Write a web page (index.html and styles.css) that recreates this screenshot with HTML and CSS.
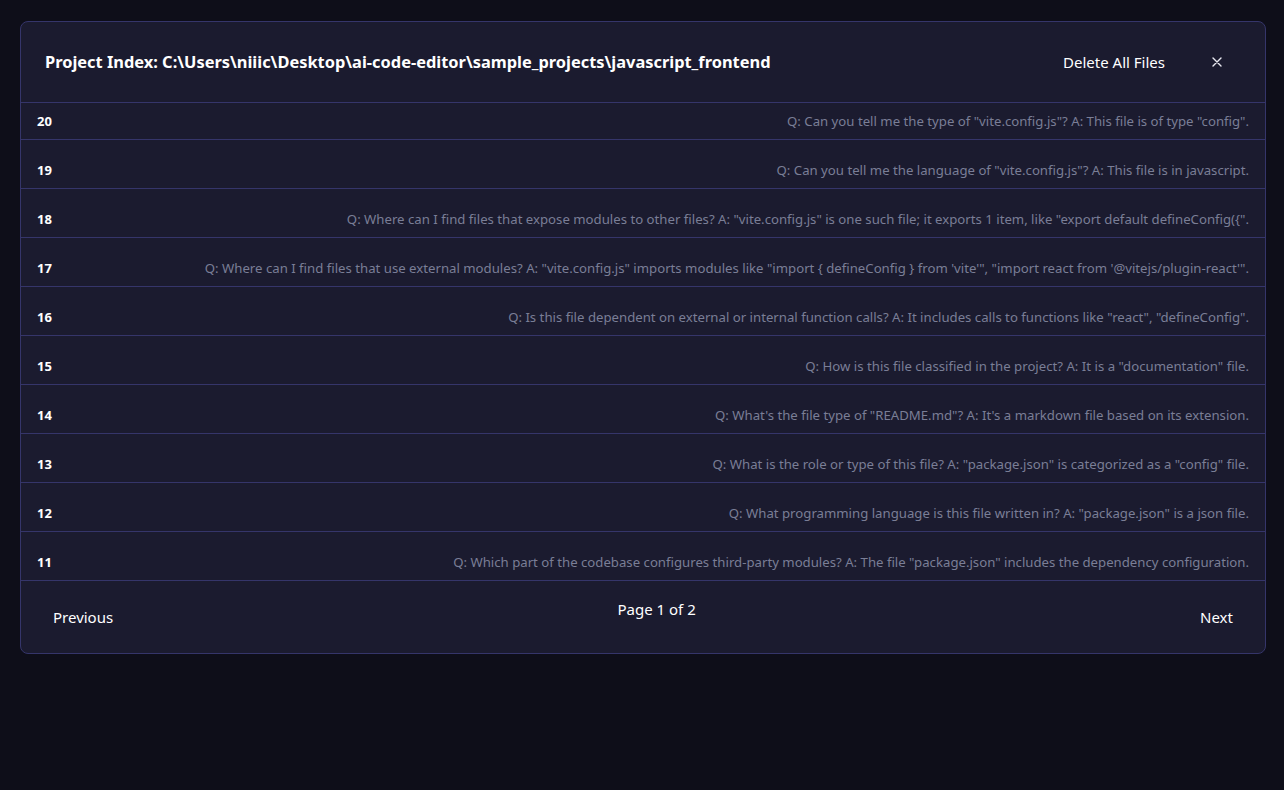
FILE: index.html
```html
<!DOCTYPE html>
<html lang="en">
<head>
<meta charset="utf-8">
<title>Project Index</title>
<link rel="stylesheet" href="styles.css">
</head>
<body>
<div class="modal">
  <header class="modal-header">
    <h2 class="title">Project Index: C:\Users\niiic\Desktop\ai-code-editor\sample_projects\javascript_frontend</h2>
    <div class="actions">
      <button class="btn-text">Delete All Files</button>
      <button class="btn-close" aria-label="Close">
        <svg width="10" height="10" viewBox="0 0 10 10"><path d="M1 1L9 9M9 1L1 9" stroke="#e8e8f0" stroke-width="1.4" stroke-linecap="round"/></svg>
      </button>
    </div>
  </header>
  <div class="list-viewport">
    <ul class="list">
      <li class="row"><span class="num">20</span><span class="qa">Q: Can you tell me the type of "vite.config.js"? A: This file is of type "config".</span></li>
      <li class="row"><span class="num">19</span><span class="qa">Q: Can you tell me the language of "vite.config.js"? A: This file is in javascript.</span></li>
      <li class="row"><span class="num">18</span><span class="qa">Q: Where can I find files that expose modules to other files? A: "vite.config.js" is one such file; it exports 1 item, like "export default defineConfig({".</span></li>
      <li class="row"><span class="num">17</span><span class="qa">Q: Where can I find files that use external modules? A: "vite.config.js" imports modules like "import { defineConfig } from 'vite'", "import react from '@vitejs/plugin-react'".</span></li>
      <li class="row"><span class="num">16</span><span class="qa">Q: Is this file dependent on external or internal function calls? A: It includes calls to functions like "react", "defineConfig".</span></li>
      <li class="row"><span class="num">15</span><span class="qa">Q: How is this file classified in the project? A: It is a "documentation" file.</span></li>
      <li class="row"><span class="num">14</span><span class="qa">Q: What's the file type of "README.md"? A: It's a markdown file based on its extension.</span></li>
      <li class="row"><span class="num">13</span><span class="qa">Q: What is the role or type of this file? A: "package.json" is categorized as a "config" file.</span></li>
      <li class="row"><span class="num">12</span><span class="qa">Q: What programming language is this file written in? A: "package.json" is a json file.</span></li>
      <li class="row"><span class="num">11</span><span class="qa">Q: Which part of the codebase configures third-party modules? A: The file "package.json" includes the dependency configuration.</span></li>
    </ul>
  </div>
  <footer class="modal-footer">
    <button class="btn-text">Previous</button>
    <span class="page">Page 1 of 2</span>
    <button class="btn-text">Next</button>
  </footer>
</div>
</body>
</html>
```

FILE: styles.css
```css
html, body {
  margin: 0;
  padding: 0;
  background: #0e0e19;
  font-family: "Segoe UI", "Noto Sans", "Open Sans", sans-serif;
}
body {
  padding: 21px 18px 0 20px;
  height: 790px;
  box-sizing: border-box;
}
.modal {
  background: #1b1b2f;
  border: 1px solid #35356a;
  border-radius: 8px;
  overflow: hidden;
  display: flex;
  flex-direction: column;
}
.modal-header {
  height: 80px;
  display: flex;
  align-items: center;
  justify-content: space-between;
  padding: 0 35px 1px 24px;
  box-sizing: border-box;
  height: 81px;
  border-bottom: 1px solid #35356a;
}
.title {
  margin: 0;
  color: #ffffff;
  font-size: 16.4px;
  font-weight: 700;
}
.actions {
  display: flex;
  align-items: center;
  gap: 39px;
}
.btn-text {
  background: none;
  border: 0;
  padding: 0;
  color: #ffffff;
  font-family: inherit;
  font-size: 15px;
  cursor: pointer;
}
.btn-close {
  background: none;
  border: 0;
  padding: 8px;
  display: flex;
  cursor: pointer;
}
.list-viewport {
  height: 477px;
  overflow: hidden;
}
.list {
  list-style: none;
  margin: -12px 0 0 0;
  padding: 0;
}
.row {
  box-sizing: border-box;
  height: 49px;
  border-bottom: 1px solid #35356a;
  display: flex;
  align-items: center;
  justify-content: space-between;
  padding: 12px 16px 0 16px;
  gap: 20px;
}
.num {
  color: #ffffff;
  font-weight: 700;
  font-size: 13px;
}
.qa {
  color: #7a7e96;
  font-size: 13.2px;
  text-align: right;
  white-space: nowrap;
}
.modal-footer {
  border-top: 1px solid #35356a;
  height: 72px;
  display: flex;
  justify-content: space-between;
  align-items: flex-start;
  padding: 0 32px;
}
.modal-footer .btn-text {
  margin-top: 26px;
  font-size: 15px;
}
.page {
  color: #ffffff;
  font-size: 15px;
  margin-top: 18px;
}
```
